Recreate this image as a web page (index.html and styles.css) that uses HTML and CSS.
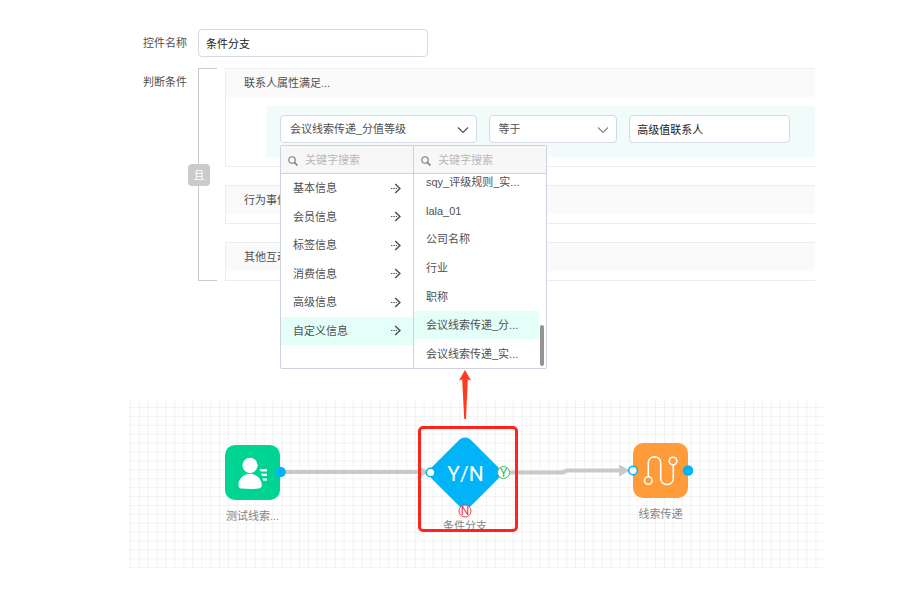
FILE: index.html
```html
<!DOCTYPE html>
<html lang="zh-CN">
<head>
<meta charset="utf-8">
<title>条件分支</title>
<link rel="stylesheet" href="styles.css">
</head>
<body>
<svg width="0" height="0" class="defs" aria-hidden="true">
  <symbol id="chevron" viewBox="0 0 12 8"><path d="M1 1.5 6 6.5 11 1.5" fill="none" stroke="currentColor" stroke-width="1.2"/></symbol>
  <symbol id="search" viewBox="0 0 10 10"><circle cx="4" cy="4" r="3.2" fill="none" stroke="currentColor" stroke-width="1.1"/><path d="M6.2 6.2 9.500 9.500" stroke="currentColor" stroke-width="1.5"/></symbol>
  <symbol id="go" viewBox="0 0 10 11"><path d="M4.2 1 8.9 5.5 4.2 10" fill="none" stroke="currentColor" stroke-width="1.5"/><path d="M0 5.5H1.4M2.4 5.5H3.8M4.8 5.5H6" stroke="currentColor" stroke-width="1.1"/></symbol>
</svg>
<main class="page">
  <form class="form">
    <div class="row">
      <label class="label" for="name">控件名称</label>
      <input class="field name" id="name" type="text" value="条件分支">
    </div>
    <div class="row">
      <span class="label">判断条件</span>
      <div class="rules">
        <div class="bracket"><button class="join" type="button">且</button></div>
        <div class="cards">
          <section class="card">
            <h2 class="card-title">联系人属性满足...</h2>
            <div class="condition">
              <div class="picker picker-wide">
                <select class="field" aria-label="属性"><option>会议线索传递_分值等级</option></select>
                <svg class="chevron"><use href="#chevron"/></svg>
                <div class="menu">
                  <div class="column">
                    <label class="search"><svg class="search-icon"><use href="#search"/></svg><input class="search-input" type="text" placeholder="关键字搜索" aria-label="关键字搜索"></label>
                    <ul class="groups">
                      <li><button type="button" class="item">基本信息<svg class="go"><use href="#go"/></svg></button></li>
                      <li><button type="button" class="item">会员信息<svg class="go"><use href="#go"/></svg></button></li>
                      <li><button type="button" class="item">标签信息<svg class="go"><use href="#go"/></svg></button></li>
                      <li><button type="button" class="item">消费信息<svg class="go"><use href="#go"/></svg></button></li>
                      <li><button type="button" class="item">高级信息<svg class="go"><use href="#go"/></svg></button></li>
                      <li><button type="button" class="item active">自定义信息<svg class="go"><use href="#go"/></svg></button></li>
                    </ul>
                  </div>
                  <div class="column">
                    <label class="search"><svg class="search-icon"><use href="#search"/></svg><input class="search-input" type="text" placeholder="关键字搜索" aria-label="关键字搜索"></label>
                    <div class="scroller">
                      <ul class="options">
                        <li><button type="button" class="item">sqy_评级规则_实...</button></li>
                        <li><button type="button" class="item">lala_01</button></li>
                        <li><button type="button" class="item">公司名称</button></li>
                        <li><button type="button" class="item">行业</button></li>
                        <li><button type="button" class="item">职称</button></li>
                        <li><button type="button" class="item active">会议线索传递_分...</button></li>
                        <li><button type="button" class="item">会议线索传递_实...</button></li>
                      </ul>
                      <span class="thumb"></span>
                    </div>
                  </div>
                </div>
              </div>
              <div class="picker picker-narrow">
                <select class="field" aria-label="运算符"><option>等于</option></select>
                <svg class="chevron light"><use href="#chevron"/></svg>
              </div>
              <div class="value"><input class="field" type="text" value="高级值联系人" aria-label="值"></div>
            </div>
          </section>
          <section class="card"><h2 class="card-title">行为事件满足...</h2></section>
          <section class="card"><h2 class="card-title">其他互动满足...</h2></section>
        </div>
      </div>
    </div>
  </form>

  <section class="canvas" aria-label="流程">
    <svg class="grid" aria-hidden="true">
      <defs><pattern id="cells" x="1" y="7" width="8.9" height="8.9" patternUnits="userSpaceOnUse"><path d="M0 .5H8.9M.5 0V8.9" stroke="#f2f2f2" fill="none"/></pattern></defs>
      <rect width="100%" height="100%" fill="url(#cells)"/>
    </svg>
    <svg class="links" viewBox="0 0 695 168" aria-hidden="true">
      <g fill="none" stroke="#c9c9c9" stroke-width="4">
        <path d="M156 72H292"/>
        <path d="M378 72.4H434L438 70.4H492"/>
      </g>
      <path d="M289 66 300 72 289 78ZM490 64.4 501 70.4 490 76.4Z" fill="#c9c9c9"/>
    </svg>

    <div class="node node-source">
      <svg class="tile" viewBox="0 0 55 55">
        <rect width="55" height="55" rx="10" fill="#00d492"/>
        <g fill="#fff"><circle cx="25" cy="20.3" r="7.6"/><path d="M25 28.7C18.5 28.7 13.4 34 13.4 40.2 13.4 42.8 15 43.4 17 43.6Q25 44.4 33 43.6C35.2 43.4 36.8 42.8 36.8 40.2 36.8 34 31.5 28.7 25 28.7Z"/>
        <path d="M34.5 24H42V26.4H35.8ZM36.2 28.7H42V31.1H37.2ZM37.4 33.4H42V35.8H38.2Z"/></g>
      </svg>
      <span class="caption">测试线索...</span>
    </div>

    <div class="node node-branch">
      <svg class="diamond" viewBox="0 0 90 90">
        <rect x="17.5" y="17.5" width="55" height="55" rx="8" transform="rotate(45 45 45)" fill="#00b4f7"/>
        <text class="yn" x="45.5" y="53" text-anchor="middle">Y/N</text>
        <circle cx="10.6" cy="44.5" r="4.3" fill="#fff" stroke="#00b4f7" stroke-width="1.6"/>
        <g fill="#fff" stroke-width="1"><circle cx="83.5" cy="44.5" r="6" stroke="#2fc25b"/><circle cx="45" cy="83" r="6" stroke="#f0403c"/></g>
        <text class="port" x="83.5" y="48.5" text-anchor="middle" fill="#2fb854">Y</text>
        <text class="port" x="45" y="87" text-anchor="middle" fill="#f0403c">N</text>
      </svg>
      <span class="caption">条件分支</span>
    </div>

    <div class="node node-target">
      <svg class="tile" viewBox="0 0 55 55">
        <rect width="55" height="55" rx="10" fill="#ff9b38"/>
        <g fill="none" stroke="#fff" stroke-width="1.6"><circle cx="15.3" cy="37.5" r="3.8"/><circle cx="40" cy="18" r="3.8"/><path d="M15.3 33.7V20C15.3 11.8 27.7 11.8 27.7 20V35C27.7 43.7 40.3 43.7 40.3 35V21.8"/></g>
      </svg>
      <span class="caption">线索传递</span>
    </div>

    <svg class="links" viewBox="0 0 695 168" aria-hidden="true">
      <g fill="#00b4f7"><circle cx="151.6" cy="72" r="5.3"/><circle cx="559" cy="70.5" r="5.3"/></g>
      <circle cx="504" cy="70.5" r="4.3" fill="#fff" stroke="#00b4f7" stroke-width="1.6"/>
    </svg>
    <div class="highlight"></div>
    <svg class="arrow" viewBox="0 0 14 50" aria-hidden="true"><path d="M7 0 13 10.5 9.8 9.5 8 49H6.2L4.2 9.5 1 10.5Z" fill="#ff3b1f"/></svg>
  </section>
</main>
</body>
</html>
```

FILE: styles.css
```css
* { box-sizing: border-box; }

body {
  margin: 0;
  background: #fff;
  color: #505050;
  font: 11px/16px "Liberation Sans", "Noto Sans CJK SC", sans-serif;
}

ul { margin: 0; padding: 0; list-style: none; }
button, input, select { font: inherit; color: inherit; }
.defs { position: absolute; }

.page { padding: 29px 99px 0 129px; }
.form { display: flex; flex-direction: column; gap: 11px; padding-right: 9px; }
.row { display: flex; }
.label { flex: none; width: 69px; padding: 6px 11px 0 0; text-align: right; }

.field {
  display: block;
  width: 100%;
  height: 28px;
  padding: 0 7px;
  border: 1px solid #d3dae5;
  border-radius: 4px;
  background: #fff;
  appearance: none;
}
input.field { color: #222; }
.name { width: 230px; }

.rules { display: flex; flex: 1; min-width: 0; gap: 8px; }
.bracket {
  display: flex;
  align-items: center;
  width: 19px;
  border: 1px solid #cbcbcb;
  border-right: 0;
}
.join {
  flex: none;
  width: 22px;
  height: 22px;
  margin-left: -11px;
  padding: 0;
  border: 0;
  border-radius: 4px;
  background: #cbcbcb;
  color: #fff;
  line-height: 18px;
}

.cards { display: flex; flex: 1; flex-direction: column; gap: 18px; min-width: 0; }
.card {
  padding-bottom: 9px;
  border: 1px solid #ededed;
  border-right: 0;
}
.card-title {
  margin: 0;
  padding: 6px 18px;
  background: #fafafa;
  font-size: 11px;
  font-weight: 400;
}
.condition {
  display: flex;
  gap: 12px;
  margin: 9px 0 0 40px;
  padding: 9px 25px 14px 14px;
  background: #f1fcfa;
}
.picker { position: relative; min-width: 0; }
.picker .field { padding-left: 9px; }
.picker-wide { flex: 197 1 0; }
.picker-narrow { flex: 129 1 0; }
.value { flex: 161 1 0; min-width: 0; }
.chevron {
  position: absolute;
  top: 11px;
  right: 8px;
  width: 12px;
  height: 8px;
  pointer-events: none;
}
.light { color: #888; }

.menu {
  position: absolute;
  z-index: 2;
  top: 30px;
  left: 0;
  display: flex;
  width: 267px;
  border: 1px solid #ccd2e0;
  border-radius: 2px;
  background: #fff;
}
.column { flex: 1; min-width: 0; }
.column + .column { border-left: 1px solid #ccd2e0; }
.search {
  display: flex;
  align-items: center;
  gap: 7px;
  height: 28px;
  padding: 0 7px;
  border-bottom: 1px solid #ccd2e0;
  background: #f7f7f7;
}
.search-icon { flex: none; width: 10px; height: 10px; margin-top: 3px; color: #777; }
.search-input {
  width: 100%;
  min-width: 0;
  padding: 0;
  border: 0;
  background: none;
}
.search-input::placeholder { color: #b8b8b8; }
.groups {
  display: grid;
  grid-template-rows: repeat(6, 1fr);
  height: 171px;
}
.scroller {
  position: relative;
  display: flex;
  flex-direction: column;
  justify-content: flex-end;
  height: 194px;
  padding-right: 7px;
  overflow: hidden;
}
.options {
  display: grid;
  flex: none;
  grid-template-rows: repeat(7, 1fr);
  height: 200px;
}
.item {
  display: flex;
  align-items: center;
  justify-content: space-between;
  width: 100%;
  height: 100%;
  padding: 0 12px;
  border: 0;
  background: none;
  white-space: nowrap;
}
.active { background: #e3fff7; }
.go { width: 10px; height: 11px; }
.thumb {
  position: absolute;
  right: 2px;
  bottom: 2px;
  width: 4px;
  height: 41px;
  border-radius: 2px;
  background: #949494;
}

.canvas { position: relative; height: 168px; margin-top: 119px; }
.grid { display: block; width: 100%; height: 100%; }
.links { position: absolute; top: 0; left: 0; width: 695px; height: 168px; }
.node {
  position: absolute;
  display: flex;
  flex-direction: column;
  align-items: center;
  color: #858585;
  white-space: nowrap;
}
.tile { width: 55px; height: 55px; margin-bottom: 8px; }
.node-source { top: 45px; left: 96px; }
.node-target { top: 43px; left: 504px; }
.node-branch { top: 28px; left: 291px; }
.diamond { width: 90px; height: 90px; }
.yn { fill: #fff; font-family: Roboto, sans-serif; font-size: 21px; }
.port { font-family: Roboto, sans-serif; font-size: 12px; }
.highlight {
  position: absolute;
  top: 26px;
  left: 289px;
  width: 100px;
  height: 106px;
  border: 3px solid #ff2420;
  border-radius: 5px;
}
.arrow { position: absolute; top: -30px; left: 329px; width: 14px; height: 50px; }
```
